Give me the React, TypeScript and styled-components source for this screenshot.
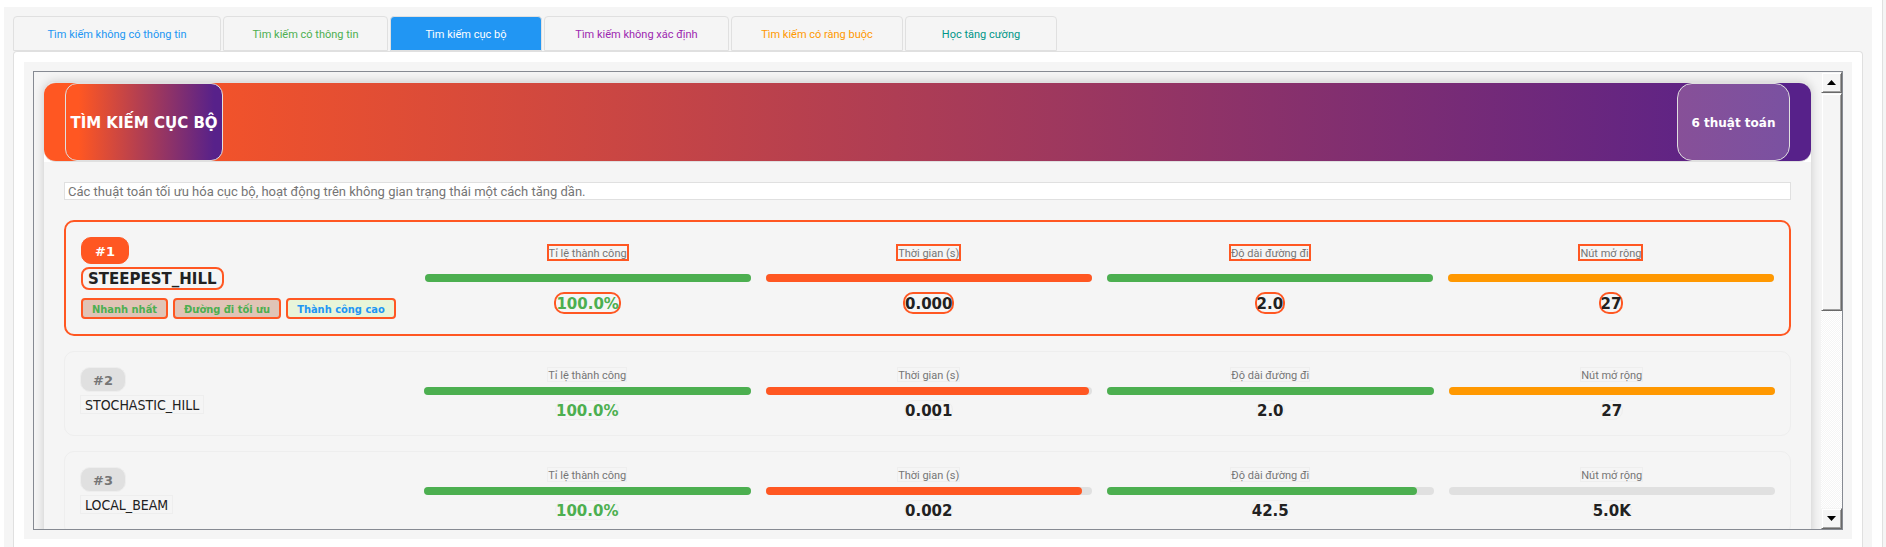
import React from 'react';
import styled, { createGlobalStyle, css } from 'styled-components';

const condensed = 'Tahoma, "DejaVu Sans Condensed", "DejaVu Sans", sans-serif';
const light = 'Tahoma, Roboto, "Noto Sans", sans-serif';
const wide = 'Tahoma, "DejaVu Sans", sans-serif';

const Global = createGlobalStyle`
  *, *::before, *::after { box-sizing: border-box; }
  html, body, #root { height: 100%; }
  body {
    margin: 0;
    overflow: hidden;
    background: #fff;
    color: #212121;
    font-family: ${condensed};
  }
`;

const Page = styled.div`
  height: 100%;
  display: flex;
  background: #f5f5f5;
  padding-right: 3px;
`;

const Frame = styled.div`
  flex: 1;
  min-width: 0;
  display: flex;
  padding: 7px 10px 0 4px;
  background: #fff;
  border-right: 1px solid #e0e0e0;
`;

const Panel = styled.main`
  flex: 1;
  min-width: 0;
  display: flex;
  flex-direction: column;
  padding: 9px 9px 0;
  background: #f5f5f5;
`;

const Tabs = styled.nav`
  display: flex;
  gap: 2px;
`;

const Tab = styled.button<{ $color: string; $active?: boolean; $width: number }>`
  width: ${(p) => p.$width}px;
  height: 35px;
  padding: 2px 0 0;
  border: 1px solid #e0e0e0;
  border-radius: 4px 4px 0 0;
  background: ${(p) => (p.$active ? p.$color : '#f5f5f5')};
  color: ${(p) => (p.$active ? '#fff' : p.$color)};
  font-family: ${light};
  font-size: 11px;
`;

const Pane = styled.section`
  flex: 1;
  min-height: 0;
  display: flex;
  padding: 10px 10px 8px;
  background: #fff;
  border: 1px solid #e0e0e0;
  border-bottom: 0;
  border-radius: 4px 4px 0 0;
`;

const Inset = styled.div`
  flex: 1;
  min-width: 0;
  display: flex;
  padding: 9px;
  background: #f5f5f5;
`;

const ScrollArea = styled.div`
  flex: 1;
  min-width: 0;
  display: flex;
  border: 1px solid #868a92;
`;

const Viewport = styled.div`
  flex: 1;
  min-width: 0;
  overflow: hidden;
  padding: 9px 9px 0;
`;

const Card = styled.article`
  border: 1px solid #e0e0e0;
  border-radius: 12px 12px 0 0;
  box-shadow: 0 0 10px rgba(0, 0, 0, 0.15);
  background: #f5f5f5;
`;

const Header = styled.header`
  display: flex;
  justify-content: space-between;
  height: 80px;
  padding: 0 21px;
  border-top: 1px solid #e0e0e0;
  border-bottom: 1px solid #e0e0e0;
  border-radius: 12px;
  background: linear-gradient(90deg, #ff5722 2%, #57218a 98%);
  color: #fff;
`;

const Corners = styled.div`
  background: #fff;
  border-radius: 12px 12px 0 0;
`;

const Title = styled.h1`
  display: flex;
  align-items: center;
  justify-content: center;
  width: 158px;
  margin: 0;
  padding-top: 2px;
  border: 1px solid #e0e0e0;
  border-radius: 12px;
  background: linear-gradient(90deg, #ff5722 8%, #57218a 95%);
  font-family: ${wide};
  font-size: 15px;
  white-space: nowrap;
`;

const Count = styled.span`
  display: flex;
  align-items: center;
  justify-content: center;
  width: 113px;
  padding-top: 2px;
  border: 1px solid #e0e0e0;
  border-radius: 15px;
  background: linear-gradient(90deg, #875098, #7a51a1);
  font-family: ${wide};
  font-size: 12px;
  font-weight: 700;
`;

const Body = styled.div`
  display: flex;
  flex-direction: column;
  gap: 15px;
  padding: 20px;
`;

const Description = styled.p`
  height: 18px;
  margin: 0 0 5px;
  padding: 0 3px;
  border: 1px solid #e0e0e0;
  background: #fff;
  color: #757575;
  font-family: ${light};
  font-size: 13px;
  line-height: 17px;
`;

const Row = styled.section<{ $best: boolean }>`
  display: grid;
  grid-template-columns: calc(20% - 10px) repeat(4, minmax(0, 1fr));
  column-gap: 15px;
  border: 1px solid #eee;
  border-radius: 10px;
  padding: 15px;
  height: 85px;
  ${(p) => p.$best && css`
    border: 2px solid #ff5722;
    height: 116px;
  `}
`;

const Info = styled.div`
  display: flex;
  flex-direction: column;
  align-items: flex-start;
`;

const Rank = styled.span<{ $best: boolean }>`
  width: ${(p) => (p.$best ? 48 : 46)}px;
  height: ${(p) => (p.$best ? 27 : 25)}px;
  border: 1px solid ${(p) => (p.$best ? '#ff5722' : '#eee')};
  border-radius: 10px;
  background: ${(p) => (p.$best ? '#ff5722' : '#e0e0e0')};
  color: ${(p) => (p.$best ? '#fff' : '#757575')};
  font-family: ${wide};
  font-size: 13px;
  font-weight: 700;
  line-height: ${(p) => (p.$best ? 27 : 25)}px;
  text-align: center;
`;

const Name = styled.h2<{ $best: boolean }>`
  height: 19px;
  margin: 3px 0 0;
  padding: 0 4px;
  border: 1px solid #eee;
  font-size: 14px;
  font-weight: 400;
  line-height: 18px;
  ${(p) => p.$best && css`
    height: 23px;
    padding: 0 5px;
    border: 2px solid #ff5722;
    border-radius: 8px;
    font-family: ${wide};
    font-size: 15px;
    font-weight: 700;
    line-height: 21px;
  `}
`;

const Tags = styled.div`
  display: flex;
  gap: 5px;
  margin-top: 8px;
`;

const Tag = styled.span<{ $info?: boolean }>`
  height: 21px;
  padding: 0 9px;
  border: 2px solid #ff5722;
  border-radius: 4px;
  background: ${(p) => (p.$info ? '#e8f5d9' : '#e0c4b6')};
  color: ${(p) => (p.$info ? '#2196f3' : '#4caf50')};
  font-size: 11px;
  font-weight: 700;
  line-height: 19px;
  white-space: nowrap;
`;

const Metric = styled.div<{ $best: boolean }>`
  display: flex;
  flex-direction: column;
  align-items: center;
  padding-top: ${(p) => (p.$best ? 7 : 0)}px;
`;

const MetricLabel = styled.span<{ $best: boolean }>`
  height: 15px;
  border: 1px solid #eee;
  color: #757575;
  font-family: ${light};
  font-size: 11px;
  line-height: 15px;
  white-space: nowrap;
  ${(p) => p.$best && css`
    height: 17px;
    border: 2px solid #ff5722;
  `}
`;

const Track = styled.div<{ $best: boolean }>`
  align-self: stretch;
  height: 8px;
  margin: ${(p) => (p.$best ? '13px 0 10px' : '5px 0')};
  border-radius: 4px;
  background: #e0e0e0;
`;

const Fill = styled.div<{ $color: string }>`
  height: 100%;
  border-radius: 4px;
  background: ${(p) => p.$color};
`;

const MetricValue = styled.span<{ $best: boolean; $good: boolean }>`
  height: 20px;
  border: 1px solid #eee;
  border-radius: 10px;
  color: ${(p) => (p.$good ? '#4caf50' : '#212121')};
  font-family: ${wide};
  font-size: 15px;
  font-weight: 700;
  line-height: 20px;
  ${(p) => p.$best && css`
    height: 22px;
    border: 2px solid #ff5722;
  `}
`;

const ScrollBar = styled.div`
  width: 21px;
  display: flex;
  flex-direction: column;
  background: repeating-conic-gradient(#fff 0 25%, #f5f5f5 0 50%) 0 0 / 2px 2px;
`;

const raised = css`
  background: #f5f5f5;
  border: 1px solid;
  border-color: #f5f5f5 #696969 #696969 #f5f5f5;
  box-shadow: inset 1px 1px #fff, inset -1px -1px #a0a0a0;
`;

const ArrowButton = styled.button`
  ${raised}
  height: 21px;
  padding: 0;
  display: grid;
  place-items: center;
`;

const Thumb = styled.div`
  ${raised}
  height: 218px;
  margin-bottom: auto;
`;

const tabs = [
  { label: 'Tìm kiếm không có thông tin', color: '#2196f3', width: 208 },
  { label: 'Tìm kiếm có thông tin', color: '#4caf50', width: 165 },
  { label: 'Tìm kiếm cục bộ', color: '#2196f3', width: 152, active: true },
  { label: 'Tìm kiếm không xác định', color: '#9c27b0', width: 185 },
  { label: 'Tìm kiếm có ràng buộc', color: '#ff9800', width: 172 },
  { label: 'Học tăng cường', color: '#009688', width: 152 },
];

const metricTypes = [
  { label: 'Tỉ lệ thành công', color: '#4caf50' },
  { label: 'Thời gian (s)', color: '#ff5722' },
  { label: 'Độ dài đường đi', color: '#4caf50' },
  { label: 'Nút mở rộng', color: '#ff9800' },
];

const algorithms = [
  {
    name: 'STEEPEST_HILL',
    values: ['100.0%', '0.000', '2.0', '27'],
    fills: [100, 100, 100, 100],
    tags: ['Nhanh nhất', 'Đường đi tối ưu', 'Thành công cao'],
  },
  { name: 'STOCHASTIC_HILL', values: ['100.0%', '0.001', '2.0', '27'], fills: [100, 99, 100, 100], tags: [] },
  { name: 'LOCAL_BEAM', values: ['100.0%', '0.002', '42.5', '5.0K'], fills: [100, 97, 95, 0], tags: [] },
];

export default function App() {
  return (
    <Page>
      <Global />
      <Frame>
        <Panel>
          <Tabs>
            {tabs.map((t) => (
              <Tab key={t.label} type="button" $color={t.color} $active={t.active} $width={t.width}>
                {t.label}
              </Tab>
            ))}
          </Tabs>
          <Pane>
            <Inset>
              <ScrollArea>
                <Viewport>
                  <Card>
                    <Corners>
                      <Header>
                        <Title>TÌM KIẾM CỤC BỘ</Title>
                        <Count>6 thuật toán</Count>
                      </Header>
                    </Corners>
                    <Body>
                      <Description>
                        Các thuật toán tối ưu hóa cục bộ, hoạt động trên không gian trạng thái một cách tăng dần.
                      </Description>
                      {algorithms.map((a, i) => {
                        const best = i === 0;
                        return (
                          <Row key={a.name} $best={best}>
                            <Info>
                              <Rank $best={best}>#{i + 1}</Rank>
                              <Name $best={best}>{a.name}</Name>
                              {a.tags.length > 0 && (
                                <Tags>
                                  {a.tags.map((t, n) => (
                                    <Tag key={t} $info={n === 2}>{t}</Tag>
                                  ))}
                                </Tags>
                              )}
                            </Info>
                            {metricTypes.map((m, n) => (
                              <Metric key={m.label} $best={best}>
                                <MetricLabel $best={best}>{m.label}</MetricLabel>
                                <Track $best={best}>
                                  <Fill $color={m.color} style={{ width: `${a.fills[n]}%` }} />
                                </Track>
                                <MetricValue $best={best} $good={n === 0}>{a.values[n]}</MetricValue>
                              </Metric>
                            ))}
                          </Row>
                        );
                      })}
                    </Body>
                  </Card>
                </Viewport>
                <ScrollBar>
                  <ArrowButton type="button" aria-label="Cuộn lên">
                    <svg width="9" height="5" viewBox="0 0 9 5"><path d="M0 5 4.5 0 9 5z" /></svg>
                  </ArrowButton>
                  <Thumb />
                  <ArrowButton type="button" aria-label="Cuộn xuống">
                    <svg width="9" height="5" viewBox="0 0 9 5"><path d="M0 0 4.5 5 9 0z" /></svg>
                  </ArrowButton>
                </ScrollBar>
              </ScrollArea>
            </Inset>
          </Pane>
        </Panel>
      </Frame>
    </Page>
  );
}
